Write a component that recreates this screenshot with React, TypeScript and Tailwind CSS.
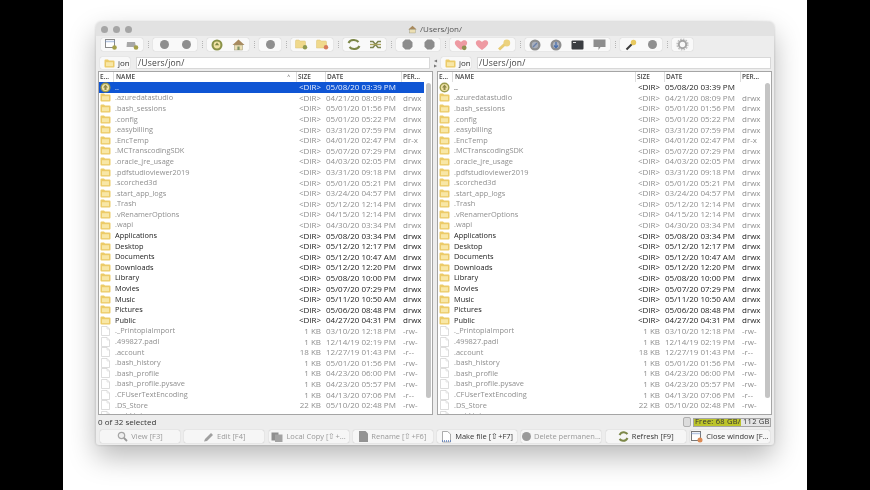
const FONT = "font-['Open_Sans','Liberation_Sans',sans-serif]"

type Row = { name: string; size: string; date: string; perm: string; strong?: boolean; kind?: "dir" | "file" }

const hidden: [string, string, string][] = [
  [".azuredatastudio", "04/21/20 08:09 PM", "drwx"],
  [".bash_sessions", "05/01/20 01:56 PM", "drwx"],
  [".config", "05/01/20 05:22 PM", "drwx"],
  [".easybilling", "03/31/20 07:59 PM", "drwx"],
  [".EncTemp", "04/01/20 02:47 PM", "dr-x"],
  [".MCTranscodingSDK", "05/07/20 07:29 PM", "drwx"],
  [".oracle_jre_usage", "04/03/20 02:05 PM", "drwx"],
  [".pdfstudioviewer2019", "03/31/20 09:18 PM", "drwx"],
  [".scorched3d", "05/01/20 05:21 PM", "drwx"],
  [".start_app_logs", "03/24/20 04:57 PM", "drwx"],
  [".Trash", "05/12/20 12:14 PM", "drwx"],
  [".vRenamerOptions", "04/15/20 12:14 PM", "drwx"],
  [".wapi", "04/30/20 03:34 PM", "drwx"],
]

const visible: [string, string][] = [
  ["Applications", "05/08/20 03:34 PM"],
  ["Desktop", "05/12/20 12:17 PM"],
  ["Documents", "05/12/20 10:47 AM"],
  ["Downloads", "05/12/20 12:20 PM"],
  ["Library", "05/08/20 10:00 PM"],
  ["Movies", "05/07/20 07:29 PM"],
  ["Music", "05/11/20 10:50 AM"],
  ["Pictures", "05/06/20 08:48 PM"],
  ["Public", "04/27/20 04:31 PM"],
]

const files: [string, string, string, string][] = [
  ["._PrintopiaImport", "1 KB", "03/10/20 12:18 PM", "-rw-"],
  [".499827.padl", "1 KB", "12/14/19 02:19 PM", "-rw-"],
  [".account", "18 KB", "12/27/19 01:43 PM", "-r--"],
  [".bash_history", "1 KB", "05/01/20 01:56 PM", "-rw-"],
  [".bash_profile", "1 KB", "04/23/20 06:00 PM", "-rw-"],
  [".bash_profile.pysave", "1 KB", "04/23/20 05:57 PM", "-rw-"],
  [".CFUserTextEncoding", "1 KB", "04/13/20 07:06 PM", "-r--"],
  [".DS_Store", "22 KB", "05/10/20 02:48 PM", "-rw-"],
  [".guid.ini", "1 KB", "04/23/20 08:28 PM", "-rw-"],
]

const rows: Row[] = [
  ...hidden.map(([name, date, perm]) => ({ name, size: "<DIR>", date, perm })),
  ...visible.map(([name, date]) => ({ name, size: "<DIR>", date, perm: "drwx", strong: true })),
  ...files.map(([name, size, date, perm]) => ({ name, size, date, perm, kind: "file" as const })),
]

function FolderIcon() {
  return (
    <svg width="11" height="9" viewBox="0 0 11 9" className="shrink-0">
      <path d="M0.5 1.5 Q0.5 0.5 1.5 0.5 H4 L5 1.5 H9.5 Q10.5 1.5 10.5 2.5 V7.5 Q10.5 8.5 9.5 8.5 H1.5 Q0.5 8.5 0.5 7.5 Z" fill="#eccb68" />
      <rect x="2" y="3.2" width="7" height="4" fill="#f8e7a6" />
    </svg>
  )
}

function FileIcon() {
  return (
    <svg width="9" height="10" viewBox="0 0 9 10" className="shrink-0">
      <path d="M0.5 0.5 H6 L8.5 3 V9.5 H0.5 Z" fill="#fff" stroke="#cfcfcf" strokeWidth="0.7" />
      <path d="M6 0.5 V3 H8.5" fill="none" stroke="#cfcfcf" strokeWidth="0.5" />
    </svg>
  )
}

function UpIcon() {
  return (
    <svg width="11" height="11" viewBox="0 0 11 11" className="shrink-0">
      <circle cx="5.5" cy="5.5" r="5" fill="#9a9a4c" />
      <circle cx="5.5" cy="5.5" r="3.6" fill="#f0e3a8" />
      <path d="M5.5 2.5 L8 5.5 H6.5 V8 H4.5 V5.5 H3 Z" fill="#8f8a4a" />
    </svg>
  )
}

function Dot() {
  return <span className="h-[9px] w-[9px] rounded-full bg-[#8f8f8f]" />
}

function Hex() {
  return (
    <svg width="11" height="11" viewBox="0 0 11 11">
      <path d="M3.3 0.5 H7.7 L10.5 3.3 V7.7 L7.7 10.5 H3.3 L0.5 7.7 V3.3 Z" fill="#8c8c8c" />
    </svg>
  )
}

function Tool({ icon }: { icon: string }) {
  switch (icon) {
    case "dot":
      return <Dot />
    case "hex":
      return <Hex />
    case "win":
      return (
        <svg width="12" height="11" viewBox="0 0 12 11">
          <rect x="0.5" y="0.5" width="9" height="8" fill="#fff" stroke="#8a8a8a" />
          <path d="M0.5 2.5 H9.5" stroke="#6f8fc4" strokeWidth="1.4" strokeDasharray="1 1" />
          <circle cx="9.5" cy="8.5" r="2.3" fill="#a5a04a" />
        </svg>
      )
    case "drive":
      return (
        <svg width="13" height="10" viewBox="0 0 13 10">
          <path d="M1 2 H9 L10 7 H0.5 Z" fill="#a8a8a8" />
          <circle cx="10" cy="7.5" r="2.3" fill="#a5a04a" />
        </svg>
      )
    case "up":
      return (
        <svg width="12" height="12" viewBox="0 0 12 12">
          <circle cx="6" cy="6" r="5.5" fill="#8a9248" />
          <circle cx="6" cy="6" r="3.4" fill="#f0e2a4" />
          <path d="M6 3.6 L8.2 6.2 H3.8 Z" fill="#7a8440" />
        </svg>
      )
    case "home":
      return (
        <svg width="13" height="12" viewBox="0 0 13 12">
          <path d="M6.5 0.5 L12.5 6 H0.5 Z" fill="#a88a5e" />
          <rect x="2.5" y="6" width="8" height="5" fill="#ecdfb3" stroke="#9a9678" strokeWidth="0.5" />
          <rect x="5.4" y="7.5" width="2.2" height="3.5" fill="#7f9468" />
        </svg>
      )
    case "folderGo":
    case "folderDel":
      return (
        <svg width="13" height="11" viewBox="0 0 13 11">
          <path d="M0.5 2 Q0.5 1 1.5 1 H4 L5 2 H9.5 Q10.5 2 10.5 3 V9 H0.5 Z" fill="#f0d98c" stroke="#dcc274" strokeWidth="0.5" />
          <circle cx="10" cy="8.2" r="2.2" fill={icon === "folderGo" ? "#8f9a52" : "#d67a5c"} />
        </svg>
      )
    case "sync":
      return (
        <svg width="14" height="11" viewBox="0 0 14 11">
          <path d="M1.5 4 Q3 0.8 7 1 Q10 1.2 11.5 3 M12.5 7 Q11 10.2 7 10 Q4 9.8 2.5 8" fill="none" stroke="#7c8748" strokeWidth="2" />
        </svg>
      )
    case "shuffle":
      return (
        <svg width="13" height="11" viewBox="0 0 13 11">
          <path d="M1 2.5 H4 L9 8.5 H12 M1 8.5 H4 L9 2.5 H12" fill="none" stroke="#7c8450" strokeWidth="1.6" />
          <path d="M1 5.5 H12" stroke="#a8a25c" strokeWidth="1.4" />
        </svg>
      )
    case "heartGo":
    case "heart":
      return (
        <svg width="14" height="12" viewBox="0 0 14 12">
          <path d="M7 11 C1 7 0.5 4.5 1 3 C1.8 0.8 5 0.6 7 3 C9 0.6 12.2 0.8 13 3 C13.5 4.5 13 7 7 11 Z" fill="#ee9aa2" />
          {icon === "heartGo" && <circle cx="10.2" cy="8.8" r="2.4" fill="#8f9050" />}
        </svg>
      )
    case "key":
      return (
        <svg width="14" height="12" viewBox="0 0 14 12">
          <circle cx="9.8" cy="4" r="3.4" fill="#ecd27e" />
          <path d="M7.5 5.5 L2 10.5" stroke="#e8cc74" strokeWidth="3" />
        </svg>
      )
    case "dish":
      return (
        <svg width="12" height="12" viewBox="0 0 12 12">
          <circle cx="6" cy="6" r="5.5" fill="#8e8e8e" />
          <circle cx="6" cy="6" r="3.2" fill="#a8aebb" />
          <path d="M4 8 L8 4" stroke="#6a80aa" strokeWidth="1.4" />
        </svg>
      )
    case "globe":
      return (
        <svg width="12" height="12" viewBox="0 0 12 12">
          <circle cx="6" cy="6" r="5.5" fill="#8e8e8e" />
          <circle cx="6" cy="6" r="3.2" fill="#aeb3bd" />
          <path d="M6 3 V8 M4 6.5 L6 8.8 L8 6.5" stroke="#4a70ae" strokeWidth="1.3" fill="none" />
        </svg>
      )
    case "term":
      return (
        <svg width="13" height="10" viewBox="0 0 13 10">
          <rect x="0.5" y="0.5" width="12" height="9" rx="1" fill="#3a3d41" />
          <rect x="2" y="2" width="3" height="1" fill="#ddd" />
        </svg>
      )
    case "chat":
      return (
        <svg width="13" height="12" viewBox="0 0 13 12">
          <path d="M0.5 0.5 H12.5 V8 H7.5 L5.5 11 V8 H0.5 Z" fill="#8d8d8d" />
        </svg>
      )
    case "wand":
      return (
        <svg width="12" height="12" viewBox="0 0 12 12">
          <path d="M1.5 10.5 L7 5" stroke="#3b3b3b" strokeWidth="2" />
          <circle cx="8.5" cy="3.5" r="2.7" fill="#e8c95f" />
        </svg>
      )
    case "gear":
      return (
        <svg width="13" height="13" viewBox="0 0 13 13">
          <circle cx="6.5" cy="6.5" r="3.7" fill="none" stroke="#a5a5a5" strokeWidth="2" />
          <circle cx="6.5" cy="6.5" r="5.4" fill="none" stroke="#bdbdbd" strokeWidth="1.4" strokeDasharray="1.6 1.2" />
        </svg>
      )
    default:
      return null
  }
}

const toolGroups: { w: string; icons: string[] }[] = [
  { w: "w-[42px]", icons: ["win", "drive"] },
  { w: "w-[44px]", icons: ["dot", "dot"] },
  { w: "w-[42px]", icons: ["up", "home"] },
  { w: "w-[22px]", icons: ["dot"] },
  { w: "w-[42px]", icons: ["folderGo", "folderDel"] },
  { w: "w-[43px]", icons: ["sync", "shuffle"] },
  { w: "w-[44px]", icons: ["hex", "hex"] },
  { w: "w-[65px]", icons: ["heartGo", "heart", "key"] },
  { w: "w-[85px]", icons: ["dish", "globe", "term", "chat"] },
  { w: "w-[42px]", icons: ["wand", "dot"] },
  { w: "w-[21px]", icons: ["gear"] },
]

function Toolbar() {
  return (
    <div className="flex h-[13px] items-center pl-[5px]">
      {toolGroups.map((group, i) => (
        <div key={i} className="flex items-center">
          {i > 0 && <span className="mx-[4.5px] h-[7px] w-px border-l border-dotted border-[#b5b5b5]" />}
          <div className={`flex h-[13px] items-center justify-around rounded-[2px] bg-[#f9f9f9] shadow-[0_0_1px_rgba(0,0,0,0.25)] ${group.w}`}>
            {group.icons.map((icon, j) => (
              <Tool key={j} icon={icon} />
            ))}
          </div>
        </div>
      ))}
    </div>
  )
}

function PathBar() {
  return (
    <div className="flex w-[330px] items-center gap-[6px]">
      <div className="flex h-[12px] w-[30px] items-center gap-[3px] rounded-[2px] bg-[#f9f9f9] pl-[4px] text-[8px] text-[#333] shadow-[0_0_1px_rgba(0,0,0,0.25)]">
        <FolderIcon />
        jon
      </div>
      <div className="flex h-[12px] flex-1 items-center border border-[#d8d8d8] bg-white pl-[1px] text-[8.5px] tracking-[0.2px] text-[#444]">/Users/jon/</div>
    </div>
  )
}

function FileTable({ active }: { active: boolean }) {
  return (
    <div className="relative flex h-[344px] w-[335px] flex-col overflow-hidden border border-[#a5a5a5] bg-white">
      <div className="flex h-[10px] shrink-0 items-center whitespace-nowrap text-[6.5px] font-semibold text-[#444]">
        <span className="w-[14px] pl-[1px]">E...</span>
        <span className="flex-1 border-l border-[#ddd] pl-[2px]">NAME</span>
        {active && <span className="mr-[6px] text-[5px] text-[#777]">^</span>}
        <span className="w-[29px] border-l border-[#ddd] pl-[1px]">SIZE</span>
        <span className="w-[76px] border-l border-[#ddd] pl-[1px]">DATE</span>
        <span className="w-[31px] border-l border-[#ddd] pl-[1px]">PER...</span>
      </div>
      <div className={`flex h-[10.6px] w-[325px] shrink-0 items-center whitespace-nowrap pl-[1px] text-[8px] ${active ? "bg-[#0f55d4] text-[#e8eefc]" : "font-medium text-[#222]"}`}>
        <UpIcon />
        <span className="ml-[4px] flex-1 text-[7.4px]">..</span>
        <span className="w-[24px] text-right">&lt;DIR&gt;</span>
        <span className="ml-[5px] w-[76px]">05/08/20 03:39 PM</span>
        <span className="w-[22px]" />
      </div>
      {rows.map((row) => (
        <div key={row.name} className={`flex h-[10.6px] w-[325px] shrink-0 items-center whitespace-nowrap pl-[1px] text-[8px] ${row.strong ? "font-medium text-[#222]" : "text-[#8f8f8f]"}`}>
          <span className="flex w-[11px] justify-center">{row.kind === "file" ? <FileIcon /> : <FolderIcon />}</span>
          <span className="ml-[4px] flex-1 truncate text-[7.4px]">{row.name}</span>
          <span className="w-[24px] text-right">{row.size}</span>
          <span className="ml-[5px] w-[76px]">{row.date}</span>
          <span className="w-[22px] pl-[1px]">{row.perm}</span>
        </div>
      ))}
      <div className="absolute bottom-0 right-0 top-[10px] w-[8px] bg-white">
        <div className="mx-auto mt-[1px] h-[315px] w-[5px] rounded-full bg-[#c4c4c4]" />
      </div>
    </div>
  )
}

function BottomIcon({ name }: { name: string }) {
  switch (name) {
    case "view":
      return (
        <svg width="11" height="11" viewBox="0 0 11 11">
          <circle cx="4.5" cy="4.5" r="3.2" fill="#eee" stroke="#a5a5a5" strokeWidth="1.2" />
          <path d="M7 7 L10 10" stroke="#999" strokeWidth="1.8" />
        </svg>
      )
    case "edit":
      return (
        <svg width="11" height="10" viewBox="0 0 11 10">
          <path d="M1 9.5 L2 7 L8 1 L10 3 L4 9 Z" fill="#9f9f9f" />
        </svg>
      )
    case "copy":
      return (
        <svg width="12" height="10" viewBox="0 0 12 10">
          <rect x="0.5" y="0.5" width="7" height="8" fill="#8f8f8f" />
          <rect x="4" y="2.5" width="7.5" height="7.5" fill="#a3a3a3" />
        </svg>
      )
    case "rename":
      return (
        <svg width="9" height="11" viewBox="0 0 9 11">
          <path d="M0 0 H6.5 L9 2.5 V11 H0 Z" fill="#939393" />
        </svg>
      )
    case "make":
      return (
        <svg width="11" height="12" viewBox="0 0 11 12">
          <path d="M1.5 0.5 H6.5 L9.5 3 V11 H1.5 Z" fill="#fff" stroke="#8a8a8a" strokeWidth="0.7" />
          <path d="M1 10 H10" stroke="#5a7cbc" strokeWidth="1.3" strokeDasharray="1 1" />
        </svg>
      )
    case "delete":
      return <span className="h-[9px] w-[9px] rounded-full bg-[#9a9a9a]" />
    case "refresh":
      return (
        <svg width="11" height="11" viewBox="0 0 11 11">
          <path d="M1.5 4 Q3 1 6 1.2 Q8 1.4 9.5 3 M9.5 7 Q8 10 5 9.8 Q3 9.6 1.5 8" fill="none" stroke="#7c8748" strokeWidth="2" />
        </svg>
      )
    case "close":
      return (
        <svg width="12" height="12" viewBox="0 0 12 12">
          <rect x="0.5" y="0.5" width="9" height="9" fill="#fff" stroke="#777" />
          <path d="M0.5 2.5 H9.5" stroke="#6f8fc4" strokeWidth="1.3" strokeDasharray="1 1" />
          <circle cx="9" cy="9" r="2.5" fill="#dc8a54" />
        </svg>
      )
    default:
      return null
  }
}

const bottomButtons: { icon: string; label: string; dark?: boolean }[] = [
  { icon: "view", label: "View [F3]" },
  { icon: "edit", label: "Edit [F4]" },
  { icon: "copy", label: "Local Copy [⇧+..." },
  { icon: "rename", label: "Rename [⇧+F6]" },
  { icon: "make", label: "Make file [⇧+F7]", dark: true },
  { icon: "delete", label: "Delete permanen..." },
  { icon: "refresh", label: "Refresh [F9]", dark: true },
  { icon: "close", label: "Close window [F...", dark: true },
]

export default function App() {
  return (
    <div className={`flex h-[490px] w-[870px] justify-center overflow-hidden bg-black ${FONT}`}>
      <div className="h-full w-[744px] bg-white pl-[33px] pt-[22px]">
        <div className="flex h-[423px] w-[678px] flex-col rounded-t-[5px] rounded-b-[3px] bg-[#ededed] shadow-[0_12px_28px_rgba(0,0,0,0.28),0_0_3px_rgba(0,0,0,0.2)] blur-[0.45px]">
          <div className="relative flex h-[14px] shrink-0 items-center justify-center rounded-t-[5px] bg-[#e2e2e2]">
            <div className="absolute left-[5px] top-[4px] flex gap-[5px]">
              <span className="h-[7px] w-[7px] rounded-full bg-[#a5a5a5]" />
              <span className="h-[7px] w-[7px] rounded-full bg-[#a5a5a5]" />
              <span className="h-[7px] w-[7px] rounded-full bg-[#a5a5a5]" />
            </div>
            <div className="flex items-center gap-[3px] text-[8px] text-[#555]">
              <svg width="9" height="9" viewBox="0 0 13 12">
                <path d="M6.5 0.5 L12.5 6 H0.5 Z" fill="#a88a5e" />
                <rect x="2.5" y="6" width="8" height="5" fill="#ecdfb3" stroke="#8d8a6a" strokeWidth="0.5" />
              </svg>
              /Users/jon/
            </div>
          </div>
          <div className="shrink-0 pt-[2px]">
            <Toolbar />
          </div>
          <div className="flex shrink-0 items-center justify-between pl-[4px] pr-[3px] pt-[6px]">
            <PathBar />
            <div className="flex flex-col gap-[1px] text-[4px] leading-[4px] text-[#777]">
              <span>◀</span>
              <span>▶</span>
            </div>
            <PathBar />
          </div>
          <div className="flex shrink-0 justify-between pl-[2px] pr-[2px] pt-[2px]">
            <FileTable active />
            <FileTable active={false} />
          </div>
          <div className="flex h-[14px] shrink-0 items-center justify-between pl-[2px] pr-[3px]">
            <span className="text-[8px] font-medium text-[#333]">0 of 32 selected</span>
            <div className="flex items-center gap-[2px]">
              <svg width="8" height="10" viewBox="0 0 8 10">
                <rect x="0.5" y="0.5" width="7" height="9" rx="1.5" fill="#dcdcdc" stroke="#999" strokeWidth="0.7" />
              </svg>
              <div className="relative flex h-[9px] w-[78px] items-center justify-between whitespace-nowrap border border-[#a5a5a5] bg-[#e4e4e4] px-[1px] text-[7.5px] leading-none tracking-[0.25px] text-[#333]">
                <div className="absolute inset-y-0 left-0 w-[47px] bg-[#bcc42a]" />
                <span className="relative">Free: 68 GB</span>
                <span className="relative">/ 112 GB</span>
              </div>
            </div>
          </div>
          <div className="flex shrink-0 justify-between pl-[4px] pr-[4px] pt-[1px]">
            {bottomButtons.map((button) => (
              <div
                key={button.label}
                className={`flex h-[13px] w-[80px] items-center justify-center gap-[3px] whitespace-nowrap rounded-[2px] bg-[#f6f6f6] text-[7.5px] shadow-[0_0_1px_rgba(0,0,0,0.3)] ${button.dark ? "font-medium text-[#333]" : "text-[#999]"}`}
              >
                <BottomIcon name={button.icon} />
                {button.label}
              </div>
            ))}
          </div>
        </div>
      </div>
    </div>
  )
}
